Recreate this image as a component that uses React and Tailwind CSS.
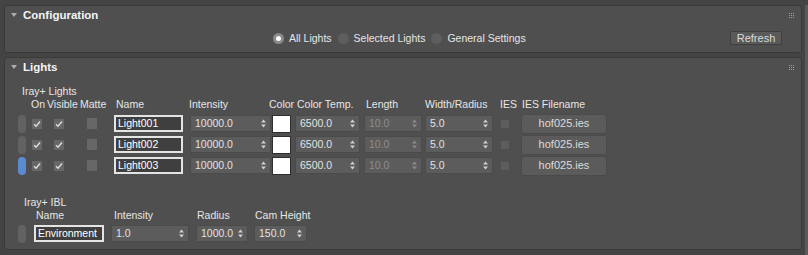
import React from 'react'

const LIGHTS = [
  { name: 'Light001', active: false },
  { name: 'Light002', active: false },
  { name: 'Light003', active: true },
]

function Arrows({ dim }) {
  return (
    <svg width="5" height="9" viewBox="0 0 5 9" className={dim ? 'opacity-40' : ''}>
      <polygon points="0,3.5 2.5,0.5 5,3.5" fill="#cfcfcf" />
      <polygon points="0,5.5 2.5,8.5 5,5.5" fill="#cfcfcf" />
    </svg>
  )
}

function Spinner({ w, value, disabled }) {
  return (
    <div className={`${w} h-[17px] flex items-center justify-between pl-[4px] pr-[4px] bg-[#5c5c5c] border border-[#4b4b4b] ${disabled ? 'text-[#8d8d8d]' : 'text-[#e2e2e2]'}`}>
      <span>{value}</span>
      <Arrows dim={disabled} />
    </div>
  )
}

function Check({ checked, size = 'w-[10px] h-[10px]' }) {
  return (
    <div className={`${size} bg-[#676767] flex items-center justify-center`}>
      {checked && (
        <svg width="8" height="8" viewBox="0 0 8 8">
          <path d="M1 4.2 L3 6.2 L7 1.5" stroke="#dedede" strokeWidth="1.4" fill="none" />
        </svg>
      )}
    </div>
  )
}

function Pill({ active }) {
  return <div className={`w-[8px] h-[18px] rounded-full ${active ? 'bg-[#5a8ad0]' : 'bg-[#626262]'}`} />
}

function NameBox({ w, value }) {
  return (
    <div className={`${w} h-[17px] flex items-center pl-[2px] bg-[#3f3f3f] border-2 border-[#e4e4e4] text-white`}>
      {value}
    </div>
  )
}

function Grip() {
  return (
    <svg width="5" height="5" viewBox="0 0 5 5">
      {[0, 2, 4].map(x => [0, 2, 4].map(y => (
        <rect key={`${x}${y}`} x={x} y={y} width="1" height="1" fill="#a0a0a0" />
      )))}
    </svg>
  )
}

function Header({ title }) {
  return (
    <div className="h-[18px] flex items-center pl-[6px] pr-[7px]">
      <svg width="6" height="4" viewBox="0 0 6 4" className="mr-[6px]">
        <polygon points="0,0 6,0 3,4" fill="#acacac" />
      </svg>
      <span className="text-[11.5px] font-bold text-[#f4f4f4]">{title}</span>
      <div className="ml-auto"><Grip /></div>
    </div>
  )
}

function Radio({ selected, label }) {
  return (
    <div className="flex items-center mr-[6px]">
      <div className={`w-[11px] h-[11px] rounded-full flex items-center justify-center ${selected ? 'bg-[#8a8a8a]' : 'bg-[#5e5e5e]'}`}>
        {selected && <div className="w-[5px] h-[5px] rounded-full bg-white" />}
      </div>
      <span className="ml-[5px]">{label}</span>
    </div>
  )
}

export default function App() {
  return (
    <div className="w-[808px] h-[255px] bg-[#444444] flex pl-[4px] pt-[5px] font-['Liberation_Sans',Arial,sans-serif] text-[10.5px] text-[#e6e6e6] leading-[13px]">
      <div className="w-[798px] flex flex-col gap-[4px]">
        {/* Configuration */}
        <div className="h-[48px] rounded-[3px] bg-[#4f4f4f] border border-[#3a3a3a] flex flex-col">
          <Header title="Configuration" />
          <div className="mt-[7px] h-[14px] flex items-center pl-[268px] pr-[19px]">
            <Radio selected label="All Lights" />
            <Radio label="Selected Lights" />
            <Radio label="General Settings" />
            <button className="ml-auto w-[52px] h-[14px] rounded-[2px] bg-[#5a5a5a] border border-[#3f3f3f] text-[#dcdcdc] text-[11px] flex items-center justify-center">
              Refresh
            </button>
          </div>
        </div>

        {/* Lights */}
        <div className="h-[193px] rounded-[3px] bg-[#4f4f4f] border border-[#3a3a3a] flex flex-col">
          <Header title="Lights" />
          <div className="mt-[9px] pl-[17px]">Iray+ Lights</div>
          <div className="flex pl-[26px]">
            <span className="w-[16px]">On</span>
            <span className="w-[33px]">Visible</span>
            <span className="w-[36px]">Matte</span>
            <span className="w-[73px]">Name</span>
            <span className="w-[80px]">Intensity</span>
            <span className="w-[28px]">Color</span>
            <span className="w-[69px]">Color Temp.</span>
            <span className="w-[59px]">Length</span>
            <span className="w-[75px]">Width/Radius</span>
            <span className="w-[22px]">IES</span>
            <span>IES Filename</span>
          </div>
          <div className="mt-[2px] flex flex-col">
            {LIGHTS.map(l => (
              <div key={l.name} className="h-[21px] flex items-center pl-[13px]">
                <div className="w-[14px]"><Pill active={l.active} /></div>
                <div className="w-[22px]"><Check checked /></div>
                <div className="w-[33px]"><Check checked /></div>
                <div className="w-[27px]"><Check size="w-[10px] h-[11px]" /></div>
                <div className="w-[76px]"><NameBox w="w-[69px]" value={l.name} /></div>
                <div className="w-[82px]"><Spinner w="w-[81px]" value="10000.0" /></div>
                <div className="w-[23px]"><div className="w-[19px] h-[18px] bg-white border border-[#2e2e2e]" /></div>
                <div className="w-[69px]"><Spinner w="w-[65px]" value="6500.0" /></div>
                <div className="w-[61px]"><Spinner w="w-[58px]" value="10.0" disabled /></div>
                <div className="w-[76px]"><Spinner w="w-[68px]" value="5.0" /></div>
                <div className="w-[20px]"><div className="w-[8px] h-[8px] bg-[#5d5d5d]" /></div>
                <button className="w-[86px] h-[20px] rounded-[3px] bg-[#5b5b5b] border border-[#4a4a4a] text-[#dcdcdc] text-[11px] flex items-center justify-center">
                  hof025.ies
                </button>
              </div>
            ))}
          </div>

          <div className="mt-[20px] pl-[19px]">Iray+ IBL</div>
          <div className="flex pl-[31px]">
            <span className="w-[78px]">Name</span>
            <span className="w-[83px]">Intensity</span>
            <span className="w-[58px]">Radius</span>
            <span>Cam Height</span>
          </div>
          <div className="mt-[1px] h-[21px] flex items-center pl-[13px]">
            <div className="w-[16px]"><Pill /></div>
            <div className="w-[77px]"><NameBox w="w-[70px]" value="Environment" /></div>
            <div className="w-[85px]"><Spinner w="w-[78px]" value="1.0" /></div>
            <div className="w-[58px]"><Spinner w="w-[52px]" value="1000.0" /></div>
            <Spinner w="w-[53px]" value="150.0" />
          </div>
        </div>
      </div>
      <div className="ml-[3px] w-[3px] h-full bg-[#5a5a5a]" />
    </div>
  )
}
